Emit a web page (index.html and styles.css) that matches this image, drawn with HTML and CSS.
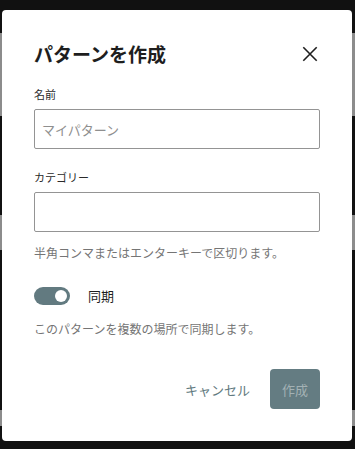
FILE: index.html
```html
<!DOCTYPE html>
<html lang="ja">
<head>
    <meta charset="UTF-8">
    <meta name="viewport" content="width=device-width, initial-scale=1.0">
    <title>パターンを作成</title>
    <link rel="stylesheet" href="styles.css">
</head>
<body>
    <!-- dimmed page behind the modal -->
    <div class="backdrop">
        <div class="band band-top"></div>
        <div class="band band-mid"></div>
        <div class="band band-low"></div>
    </div>

    <div class="modal" role="dialog">
        <div class="modal-header">
            <h1>パターンを作成</h1>
            <button class="close-btn" aria-label="閉じる">
                <svg width="20" height="20" viewBox="0 0 20 20">
                    <path d="M3.3 3.3l13.4 13.4M16.7 3.3l-13.4 13.4" stroke="#1e1e1e" stroke-width="1.6" fill="none"/>
                </svg>
            </button>
        </div>

        <div class="field">
            <label for="name">名前</label>
            <input id="name" type="text" placeholder="マイパターン">
        </div>

        <div class="field">
            <label for="category">カテゴリー</label>
            <input id="category" type="text">
            <p class="help">半角コンマまたはエンターキーで区切ります。</p>
        </div>

        <div class="toggle-row">
            <span class="toggle"><span class="knob"></span></span>
            <span class="toggle-label">同期</span>
        </div>
        <p class="help sync-help">このパターンを複数の場所で同期します。</p>

        <div class="actions">
            <button class="btn-cancel">キャンセル</button>
            <button class="btn-primary" disabled>作成</button>
        </div>
    </div>
</body>
</html>
```

FILE: styles.css
```css
body {
    margin: 0;
    background-color: #111;
    font-family: "Noto Sans CJK JP", "Noto Sans", sans-serif;
    color: #1e1e1e;
}
.backdrop {
    padding-top: 33px;
}
.band {
    background-color: #8c8c8c;
}
.band-top {
    height: 83px;
    margin-bottom: 99px;
}
.band-mid {
    height: 35px;
    margin-bottom: 160px;
}
.band-low {
    height: 16px;
}
.modal {
    position: fixed;
    top: 10px;
    left: 2px;
    width: 350px;
    height: 431px;
    box-sizing: border-box;
    padding: 32px;
    background: #fff;
    border-radius: 4px;
}
.modal-header {
    display: flex;
    align-items: center;
    justify-content: space-between;
    height: 24px;
    margin-bottom: 20px;
}
.modal-header h1 {
    margin: 0;
    font-size: 19px;
    line-height: 24px;
    font-weight: 700;
}
.close-btn {
    width: 20px;
    height: 20px;
    padding: 0;
    border: none;
    background: none;
    display: flex;
}
.field {
    margin-bottom: 20px;
}
.field label {
    display: block;
    font-size: 11px;
    line-height: 16px;
    margin-bottom: 7px;
    color: #2a2a2a;
}
.field input {
    display: block;
    width: 100%;
    height: 40px;
    box-sizing: border-box;
    padding: 0 7px;
    border: 1px solid #949494;
    border-radius: 2px;
    font-family: inherit;
    font-size: 13px;
    color: #1e1e1e;
}
.field input::placeholder {
    color: #8f8f8f;
}
.help {
    margin: 13px 0 0;
    font-size: 12px;
    line-height: 16px;
    color: #757575;
}
.toggle-row {
    display: flex;
    align-items: center;
    gap: 18px;
    margin-top: 26px;
}
.toggle {
    width: 36px;
    height: 18px;
    border-radius: 9px;
    background-color: #627a80;
    display: flex;
    align-items: center;
    justify-content: flex-end;
    padding-right: 3px;
    box-sizing: border-box;
}
.knob {
    width: 12px;
    height: 12px;
    border-radius: 50%;
    background: #fff;
}
.toggle-label {
    font-size: 13px;
    line-height: 18px;
}
.sync-help {
    margin-top: 16px;
}
.actions {
    display: flex;
    justify-content: flex-end;
    gap: 8px;
    margin-top: 32px;
}
.actions button {
    height: 40px;
    padding: 0 12px;
    border: none;
    border-radius: 4px;
    font-family: inherit;
    font-size: 13px;
}
.btn-cancel {
    background: none;
    color: #627a80;
}
.btn-primary {
    background-color: #647c82;
    color: #a3b1b4;
}
```
